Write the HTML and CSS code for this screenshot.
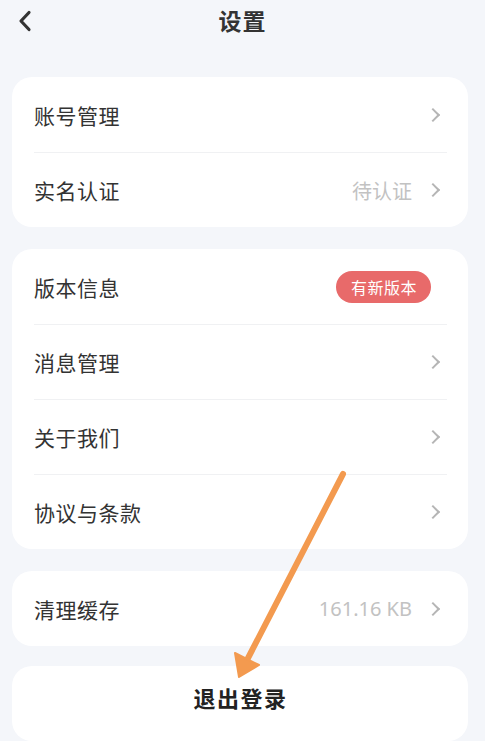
FILE: index.html
```html
<!DOCTYPE html>
<html lang="zh-CN">

<head>
    <meta charset="UTF-8">
    <meta name="viewport" content="width=device-width, initial-scale=1.0">
    <title>设置</title>
    <link rel="stylesheet" href="styles.css">
</head>

<body>
    <div class="page">
        <header class="topbar">
            <button class="back" aria-label="返回">
                <svg width="14" height="22" viewBox="0 0 14 22">
                    <path d="M11 2.5 L3 11 L11 19.5" fill="none" stroke="#333" stroke-width="3.2" stroke-linecap="round" stroke-linejoin="round" />
                </svg>
            </button>
            <h1 class="title">设置</h1>
        </header>

        <section class="card">
            <div class="row">
                <span class="label">账号管理</span>
                <span class="right"><i class="chev"></i></span>
            </div>
            <div class="row">
                <span class="label">实名认证</span>
                <span class="right"><span class="value">待认证</span><i class="chev"></i></span>
            </div>
        </section>

        <section class="card">
            <div class="row">
                <span class="label">版本信息</span>
                <span class="right"><span class="badge">有新版本</span></span>
            </div>
            <div class="row">
                <span class="label">消息管理</span>
                <span class="right"><i class="chev"></i></span>
            </div>
            <div class="row">
                <span class="label">关于我们</span>
                <span class="right"><i class="chev"></i></span>
            </div>
            <div class="row">
                <span class="label">协议与条款</span>
                <span class="right"><i class="chev"></i></span>
            </div>
        </section>

        <section class="card short">
            <div class="row">
                <span class="label">清理缓存</span>
                <span class="right"><span class="value num">161.16 KB</span><i class="chev"></i></span>
            </div>
        </section>

        <section class="card logout">
            <span class="logout-text">退出登录</span>
        </section>

        <!-- annotation arrow drawn over the page -->
        <svg class="arrow" width="485" height="741" viewBox="0 0 485 741">
            <line x1="343" y1="474" x2="246" y2="662" stroke="#f39a4f" stroke-width="6" stroke-linecap="round" />
            <polygon points="239,677 235,653 259,665" fill="#f39a4f" stroke="#f39a4f" stroke-width="2" stroke-linejoin="round" />
        </svg>
    </div>
</body>

</html>
```

FILE: styles.css
```css
/* styles.css */

body {
    margin: 0;
    background-color: #f4f6fa;
    font-family: "Noto Sans CJK SC", "Noto Sans", sans-serif;
    color: #333;
}

.page {
    position: relative;
    display: flex;
    flex-direction: column;
    gap: 22px;
    padding: 0 17px 0 12px;
    height: 741px;
    overflow: hidden;
    box-sizing: border-box;
}

.topbar {
    position: relative;
    height: 44px;
    padding-top: 3px;
    margin-bottom: 18px;
    box-sizing: border-box;
    display: flex;
    align-items: center;
    justify-content: center;
}

.back {
    position: absolute;
    left: 6px;
    top: 10px;
    padding: 0;
    border: none;
    background: none;
    display: flex;
}

.title {
    margin: 0 0 0 5px;
    font-size: 23px;
    font-weight: bold;
    color: #333;
    letter-spacing: 1px;
}

.card {
    background-color: #fff;
    border-radius: 20px;
    padding: 0 21px 0 22px;
}

.card.short {
    margin-bottom: -2px;
}

.row {
    height: 75px;
    display: flex;
    align-items: center;
    justify-content: space-between;
    border-top: 1px solid #f0f1f3;
    box-sizing: border-box;
}

.row:first-child {
    border-top: none;
}

.label {
    font-size: 21px;
    color: #333;
    letter-spacing: 0.5px;
}

.right {
    display: flex;
    align-items: center;
    gap: 16px;
    padding-right: 6px;
}

.value {
    font-size: 20px;
    color: #c2c2c2;
}

.value.num {
    font-family: "Noto Sans", sans-serif;
}

.chev {
    display: block;
    width: 8px;
    height: 8px;
    border-top: 2px solid #b5b5b5;
    border-right: 2px solid #b5b5b5;
    transform: rotate(45deg);
    margin-right: 3px;
}

.badge {
    display: inline-block;
    background-color: #e86a6a;
    color: #fff;
    font-size: 16px;
    line-height: 32px;
    height: 32px;
    padding: 0 14px 0 15px;
    border-radius: 16px;
    letter-spacing: 0.5px;
    margin-right: 10px;
}

.logout {
    height: 90px;
    display: flex;
    justify-content: center;
    padding-top: 15px;
    box-sizing: border-box;
}

.logout-text {
    font-size: 22px;
    font-weight: bold;
    color: #222;
    letter-spacing: 1.5px;
}

.arrow {
    position: absolute;
    left: 0;
    top: 0;
    pointer-events: none;
}
```
